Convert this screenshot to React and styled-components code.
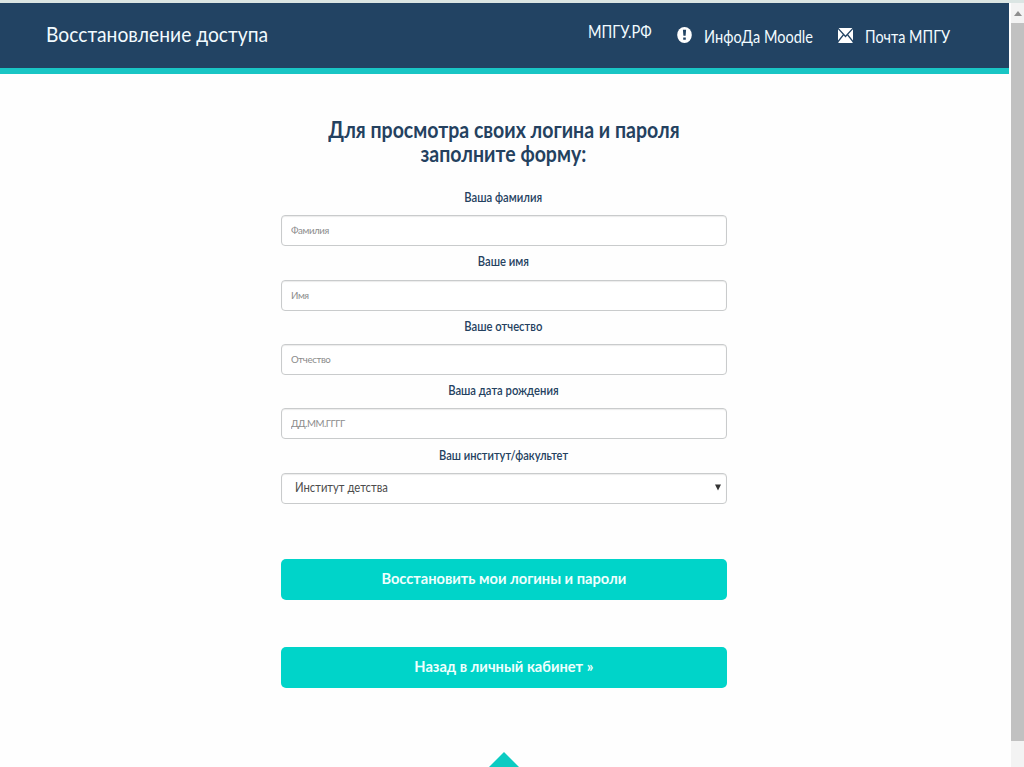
import React, { useState } from "react";
import styled, { createGlobalStyle } from "styled-components";

const GlobalStyle = createGlobalStyle`
  * {
    box-sizing: border-box;
  }
  body {
    margin: 0;
    background-color: #fefefe;
    font-family: Lato, "Open Sans", sans-serif;
    color: #24415f;
    overflow: hidden;
  }
`;

const Window = styled.div`
  display: flex;
  height: 767px;
  border-top: 3px solid #dbe5e3;
  overflow: hidden;
`;

const Page = styled.div`
  width: 1009px;
  display: flex;
  flex-direction: column;
`;

//narrow text, the site uses a condensed look everywhere
const Condensed = styled.span`
  display: inline-block;
  white-space: nowrap;
  transform: scaleX(${(props) => props.$scale});
  transform-origin: ${(props) => props.$origin || "center"};
`;

const Header = styled.header`
  height: 71px;
  flex-shrink: 0;
  display: flex;
  justify-content: space-between;
  padding: 0 59px 0 46px;
  background-color: #224363;
  border-bottom: 6px solid #19c5c4;
  color: #f2fbff;
`;

const Brand = styled.div`
  margin-top: 18px;
  font-size: 20.5px;
  line-height: 26px;
`;

const Nav = styled.nav`
  display: flex;
`;

const NavLink = styled.a`
  display: flex;
  align-items: center;
  width: ${(props) => props.$width};
  height: 24px;
  margin-top: ${(props) => props.$top};
  margin-left: ${(props) => props.$left};
  font-size: 16.5px;
  svg {
    margin-right: 12px;
    margin-top: -3px;
    flex-shrink: 0;
  }
`;

const Content = styled.main`
  width: 446px;
  margin: 44px 0 0 281px;
  display: flex;
  flex-direction: column;
`;

const Title = styled.h1`
  margin: 0 0 22px;
  display: flex;
  flex-direction: column;
  align-items: center;
  font-size: 22px;
  line-height: 24px;
  font-weight: 700;
`;

const TitleLine = styled(Condensed)`
  height: 24px;
  margin-left: -1px;
  line-height: 23px;
`;

const Form = styled.form`
  display: flex;
  flex-direction: column;
`;

const Field = styled.div`
  height: 64.4px;
  display: flex;
  flex-direction: column;
`;

const Label = styled.label`
  height: 27.3px;
  line-height: 19px;
  margin-left: -1px;
  font-size: 12.5px;
  font-weight: 600;
  text-align: center;
`;

const Input = styled.input`
  width: 100%;
  height: 31px;
  padding: 0 9px 1px;
  border: 1px solid #c9cbcc;
  border-radius: 4px;
  background-color: #fff;
  box-shadow: inset 0 1px 1px rgba(0, 0, 0, 0.08);
  font-family: inherit;
  font-size: 9.7px;
  letter-spacing: ${(props) => props.$spacing || "-0.4px"};
  color: #555;
  &::placeholder {
    color: #8c8c8c;
    opacity: 1;
  }
`;

const SelectBox = styled.div`
  height: 31px;
  display: flex;
  align-items: center;
  justify-content: space-between;
  padding: 0 5px 1px 13px;
  border: 1px solid #c9cbcc;
  border-radius: 4px;
  background-color: #fff;
  box-shadow: inset 0 1px 1px rgba(0, 0, 0, 0.08);
  font-size: 12.5px;
  color: #4c4c4c;
`;

const Button = styled.button`
  height: 41px;
  margin-top: ${(props) => props.$top};
  padding: 0 0 3px;
  border: none;
  border-radius: 5px;
  background-color: #00d4c9;
  color: #effffd;
  font-family: inherit;
  font-size: 16px;
  font-weight: 700;
  cursor: pointer;
`;

const Pointer = styled.svg`
  display: block;
  margin: 64px auto 0 487px;
  flex-shrink: 0;
`;

const Scrollbar = styled.div`
  width: 13px;
  margin-left: 2px;
  display: flex;
  flex-direction: column;
  background-color: #f3f3f3;
`;

const ScrollArrow = styled.div`
  height: 20px;
  display: flex;
  align-items: center;
  justify-content: center;
`;

const Thumb = styled.div`
  height: 718px;
  background-color: #c1c1c1;
`;

const AlertIcon = () => (
  <svg width="15" height="16" viewBox="0 0 15 16">
    <ellipse cx="7.5" cy="8" rx="7.3" ry="8" fill="#fff" />
    <path d="M5.9 2.8h3.2l-.5 6H6.4zM6.2 10.4h2.6v2.4H6.2z" fill="#224363" />
  </svg>
);

const MailIcon = () => (
  <svg width="15" height="15" viewBox="0 0 15 15">
    <path
      d="M.6 0h13.8L7.5 7.4zM0 1.3l4.8 5.3L0 12.4zM15 1.3v11.1l-4.8-5.8zM5.7 7.6l1.8 1.8 1.8-1.8 5.3 6.6v.8H.4v-.8z"
      fill="#fff"
    />
  </svg>
);

const fields = [
  { id: "surname", label: "Ваша фамилия", placeholder: "Фамилия" },
  { id: "name", label: "Ваше имя", placeholder: "Имя" },
  { id: "patronymic", label: "Ваше отчество", placeholder: "Отчество" },
  {
    id: "birthday",
    label: "Ваша дата рождения",
    placeholder: "ДД.ММ.ГГГГ",
    spacing: "-0.5px",
  },
];

const App = () => {
  const [values, setValues] = useState({});

  const handleChange = (e) => {
    setValues({ ...values, [e.target.id]: e.target.value });
  };

  return (
    <>
      <GlobalStyle />
      <Window>
        <Page>
          <Header>
            <Brand>
              <Condensed $scale={0.938} $origin="left">
                Восстановление доступа
              </Condensed>
            </Brand>
            <Nav>
              <NavLink $top="17px" $width="64px">
                <Condensed $scale={0.885} $origin="left">
                  МПГУ.РФ
                </Condensed>
              </NavLink>
              <NavLink $top="21.5px" $left="25px" $width="135.5px">
                <AlertIcon />
                <Condensed $scale={0.88} $origin="left">
                  ИнфоДа Moodle
                </Condensed>
              </NavLink>
              <NavLink $top="21.5px" $left="25px" $width="112.5px">
                <MailIcon />
                <Condensed $scale={0.875} $origin="left">
                  Почта МПГУ
                </Condensed>
              </NavLink>
            </Nav>
          </Header>
          <Content>
            <Title>
              <TitleLine $scale={0.887}>
                Для просмотра своих логина и пароля
              </TitleLine>
              <TitleLine $scale={0.887}>заполните форму:</TitleLine>
            </Title>
            <Form onSubmit={(e) => e.preventDefault()}>
              {fields.map((field) => (
                <Field key={field.id}>
                  <Label htmlFor={field.id}>
                    <Condensed $scale={0.9}>{field.label}</Condensed>
                  </Label>
                  <Input
                    id={field.id}
                    placeholder={field.placeholder}
                    value={values[field.id] || ""}
                    onChange={handleChange}
                    $spacing={field.spacing}
                  />
                </Field>
              ))}
              <Field>
                <Label>
                  <Condensed $scale={0.89}>Ваш институт/факультет</Condensed>
                </Label>
                <SelectBox>
                  <Condensed $scale={0.9} $origin="left">
                    Институт детства
                  </Condensed>
                  <svg width="6" height="7" viewBox="0 0 6 7">
                    <path d="M0 0.5h6L3 6.5z" fill="#333" />
                  </svg>
                </SelectBox>
              </Field>
              <Button type="submit" $top="49px">
                <Condensed $scale={0.915}>
                  Восстановить мои логины и пароли
                </Condensed>
              </Button>
              <Button type="button" $top="47px">
                <Condensed $scale={0.915}>Назад в личный кабинет »</Condensed>
              </Button>
            </Form>
          </Content>
          <Pointer width="34" height="17" viewBox="0 0 34 17">
            <path d="M17 0l17 17H0z" fill="#0ccbc2" />
          </Pointer>
        </Page>
        <Scrollbar>
          <ScrollArrow>
            <svg width="8" height="5" viewBox="0 0 8 5">
              <path d="M4 0l4 5H0z" fill="#8f8f8f" />
            </svg>
          </ScrollArrow>
          <Thumb />
        </Scrollbar>
      </Window>
    </>
  );
};

export default App;
